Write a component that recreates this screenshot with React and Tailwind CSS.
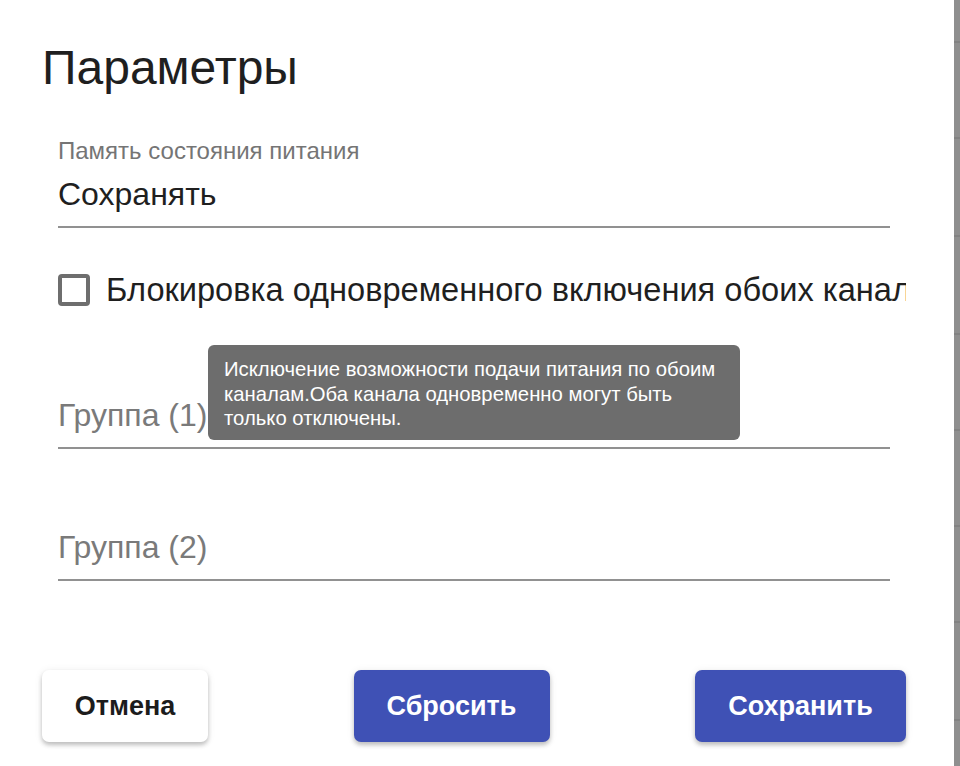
import React from "react";

const font = { fontFamily: '"Liberation Sans", Arial, sans-serif' };

function Field({ label, value, placeholder, className = "" }) {
  return (
    <div className={"flex flex-col " + className}>
      {label && (
        <div className="h-[28px] text-[24px] leading-[28px] text-[#757575] whitespace-nowrap">
          {label}
        </div>
      )}
      <div
        className={
          "border-b-2 border-[#919191] pb-[14px] text-[32px] leading-[36px] whitespace-nowrap " +
          (label ? "mt-[11px] " : "") +
          (value ? "text-[#1f1f1f]" : "text-[#7a7a7a]")
        }
      >
        {value || placeholder}
      </div>
    </div>
  );
}

function Button({ children, primary, w }) {
  return (
    <button
      className={
        "h-[72px] rounded-[7px] text-[27px] font-bold flex items-center justify-center shadow-[0_3px_4px_rgba(0,0,0,0.22),0_1px_8px_rgba(0,0,0,0.08)] " +
        w +
        " " +
        (primary ? "bg-[#3f51b5] text-white" : "bg-white text-[#1c1c1c]")
      }
    >
      {children}
    </button>
  );
}

export default function App() {
  return (
    <div className="w-[960px] h-[766px] flex overflow-hidden bg-white" style={font}>
      <div className="relative flex-1 flex flex-col pl-[42px] pr-[48px] pt-[40px] overflow-hidden">
        <h1 className="h-[56px] text-[48px] leading-[56px] text-[#1f1f1f] font-normal">
          Параметры
        </h1>

        <div className="flex flex-col pl-[16px]">
          <Field className="mt-[41px] mr-[16px]" label="Память состояния питания" value="Сохранять" />

          <div className="mt-[42px] h-[40px] flex items-center overflow-hidden whitespace-nowrap">
            <div className="w-[32px] h-[32px] shrink-0 rounded-[4px] border-[4px] border-[#6e6e6e]" />
            <span className="ml-[16px] text-[32.6px] leading-[40px] text-[#1f1f1f]">
              Блокировка одновременного включения обоих каналов
            </span>
          </div>

          <Field className="mt-[87px] mr-[16px]" placeholder="Группа (1)" />
          <Field className="mt-[80px] mr-[16px]" placeholder="Группа (2)" />
        </div>

        <div className="mt-[89px] flex justify-between">
          <Button w="w-[166px]">Отмена</Button>
          <Button w="w-[196px]" primary>Сбросить</Button>
          <Button w="w-[211px]" primary>Сохранить</Button>
        </div>

        <div className="absolute left-[208px] top-[345px] w-[532px] h-[95px] rounded-[6px] bg-[#6d6d6d] text-white px-[16px] pt-[12px] text-[20.3px] leading-[24.5px]">
          <div className="whitespace-nowrap">Исключение возможности подачи питания по обоим</div>
          <div className="whitespace-nowrap">каналам.Оба канала одновременно могут быть</div>
          <div className="whitespace-nowrap">только отключены.</div>
        </div>
      </div>

      <div className="w-[6px] h-full bg-[#8f8f8f] flex flex-col">
        <div className="h-[43px] shrink-0 border-b-2 border-[#828282]" />
        <div className="h-[96px] shrink-0 border-b-2 border-[#828282]" />
        <div className="h-[98px] shrink-0 border-b-2 border-[#828282]" />
        <div className="h-[98px] shrink-0 border-b-2 border-[#828282]" />
        <div className="h-[96px] shrink-0 border-b-2 border-[#828282]" />
        <div className="h-[96px] shrink-0 border-b-2 border-[#828282]" />
        <div className="h-[96px] shrink-0 border-b-2 border-[#828282]" />
        <div className="h-[98px] shrink-0 border-b-2 border-[#828282]" />
      </div>
    </div>
  );
}
